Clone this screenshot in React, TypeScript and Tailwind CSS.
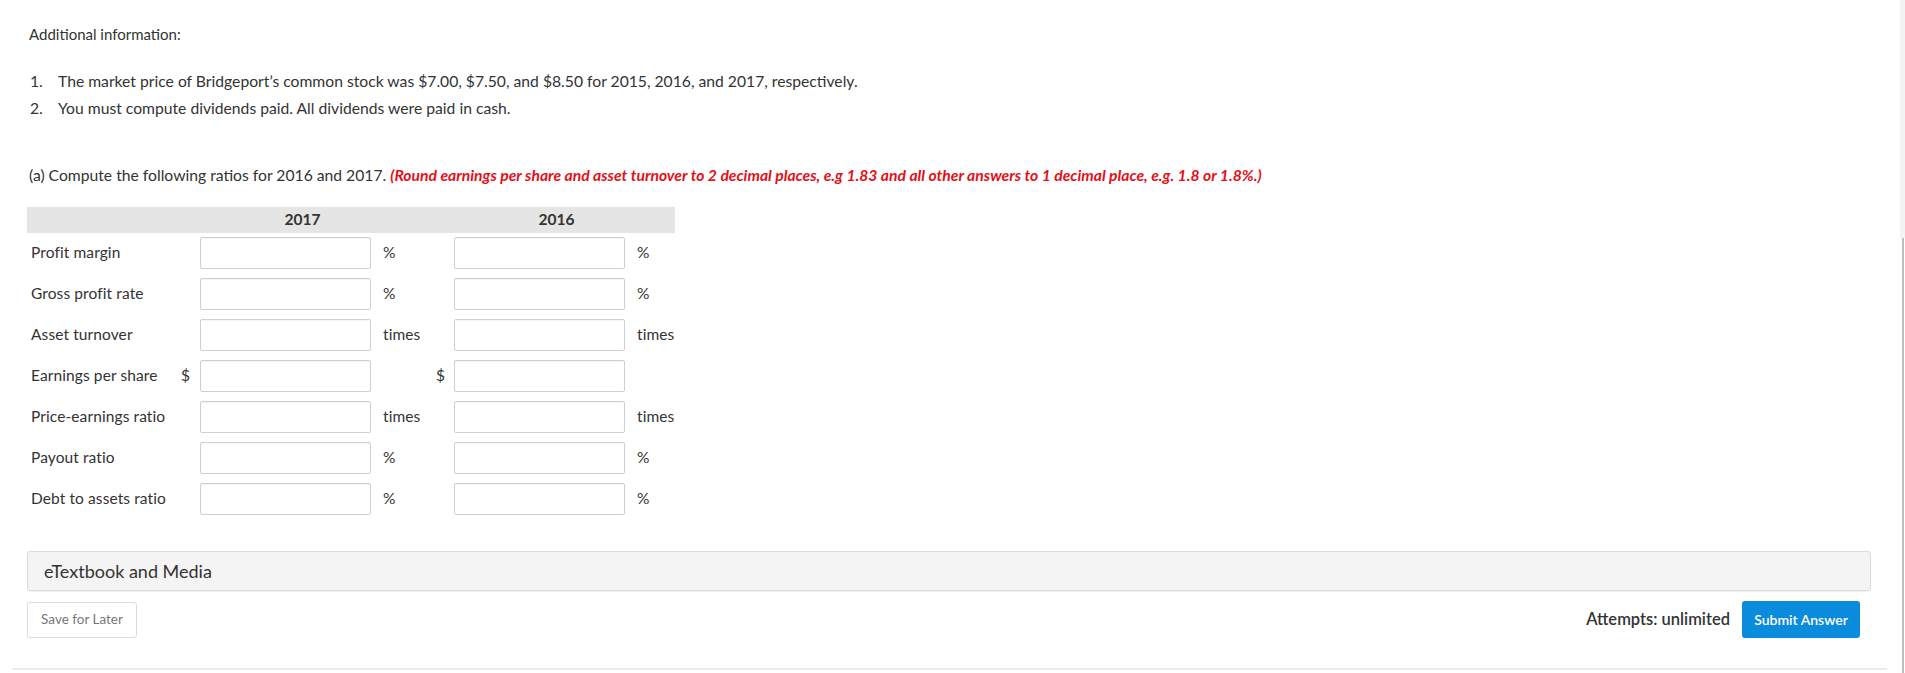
import React from 'react';

const ROWS: { label: string; pre?: string; unit?: string }[] = [
  { label: 'Profit margin', unit: '%' },
  { label: 'Gross profit rate', unit: '%' },
  { label: 'Asset turnover', unit: 'times' },
  { label: 'Earnings per share', pre: '$' },
  { label: 'Price-earnings ratio', unit: 'times' },
  { label: 'Payout ratio', unit: '%' },
  { label: 'Debt to assets ratio', unit: '%' },
];

export default function App() {
  return (
    <div className="relative h-[673px] w-full overflow-hidden bg-white text-[#333] [font-family:Lato,'Liberation_Sans',sans-serif]">
      <div className="pl-[29px] pr-[34px]">
        {/* Additional info */}
        <div className="pt-[25px] text-[15px] leading-[18px]">Additional information:</div>
        <ol className="mt-[25px] text-[15.7px] leading-[27px]">
          <li className="flex">
            <span className="w-[29px] pl-[1px]">1.</span>
            <span>The market price of Bridgeport’s common stock was $7.00, $7.50, and $8.50 for 2015, 2016, and 2017, respectively.</span>
          </li>
          <li className="flex">
            <span className="w-[29px] pl-[1px]">2.</span>
            <span>You must compute dividends paid. All dividends were paid in cash.</span>
          </li>
        </ol>

        {/* Question */}
        <div className="mt-[43px] text-[15.7px] leading-[20px]">
          (a) Compute the following ratios for 2016 and 2017.{' '}
          <span className="font-bold italic text-[#e3101a]">
            (Round earnings per share and asset turnover to 2 decimal places, e.g 1.83 and all other answers to 1 decimal place, e.g. 1.8 or 1.8%.)
          </span>
        </div>

        {/* Ratio table */}
        <div className="mt-[22px] -ml-[2px] w-[648px]">
          <div className="grid h-[26px] grid-cols-[173px_171px_83px_171px_50px] items-center bg-[#e5e5e5] text-[15.5px] font-bold">
            <div />
            <div className="pl-[34px] text-center">2017</div>
            <div />
            <div className="pl-[34px] text-center">2016</div>
            <div />
          </div>
          <div className="mt-[4px] flex flex-col gap-[9px]">
            {ROWS.map(r => (
              <div key={r.label} className="grid h-[32px] grid-cols-[173px_171px_83px_171px_50px] items-center text-[15.5px] tracking-[0.1px]">
                <div className="flex items-center justify-between pl-[4px] pr-[10px]">
                  <span>{r.label}</span>
                  {r.pre && <span>{r.pre}</span>}
                </div>
                <input className="h-[32px] w-full rounded-[2px] border border-[#cfcfcf] bg-white shadow-[inset_0_1px_1px_rgba(0,0,0,0.04)] outline-none" />
                <div className="flex items-center justify-between pl-[12px] pr-[9px]">
                  <span>{r.unit}</span>
                  {r.pre && <span>{r.pre}</span>}
                </div>
                <input className="h-[32px] w-full rounded-[2px] border border-[#cfcfcf] bg-white shadow-[inset_0_1px_1px_rgba(0,0,0,0.04)] outline-none" />
                <div className="pl-[12px]">{r.unit}</div>
              </div>
            ))}
          </div>
        </div>

        {/* eTextbook */}
        <div className="-ml-[2px] mt-[36px] flex h-[40px] items-center rounded-[3px] border border-[#dcdcdc] bg-[#f4f4f4] pl-[16px] text-[18px] shadow-[0_1px_1px_rgba(0,0,0,0.06)]">
          eTextbook and Media
        </div>

        {/* Actions */}
        <div className="-ml-[2px] mt-[10px] flex items-center justify-between pr-[11px]">
          <button className="h-[36px] w-[110px] rounded-[3px] border border-[#dcdcdc] bg-white text-[13.5px] text-[#777]">
            Save for Later
          </button>
          <div className="flex items-center gap-[12px]">
            <span className="text-[16.5px] font-semibold text-[#333]">Attempts: unlimited</span>
            <button className="h-[37px] w-[118px] rounded-[3px] bg-[#0b8bdc] text-[14px] font-semibold text-white">
              Submit Answer
            </button>
          </div>
        </div>
      </div>

      {/* bottom rule */}
      <div className="ml-[12px] mt-[30px] h-[2px] w-[1875px] bg-[#ececec]" />

      {/* scrollbar edge */}
      <div className="absolute right-0 top-0 h-[238px] w-[5px] bg-[#f4f4f4]" />
      <div className="absolute right-[1px] top-[238px] bottom-0 w-[2px] bg-[#bdbdbd]" />
    </div>
  );
}
